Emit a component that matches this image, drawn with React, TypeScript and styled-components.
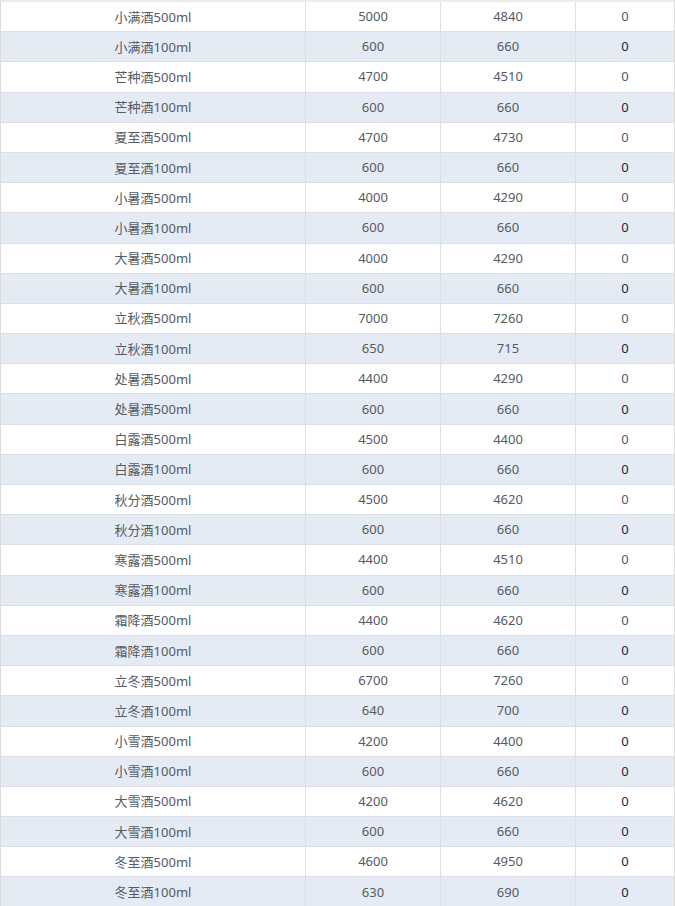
import React from 'react';
import styled, {createGlobalStyle} from 'styled-components';

const GlobalStyle = createGlobalStyle`
  html, body {
    margin: 0;
    padding: 0;
    background: #ffffff;
  }
  body {
    font-family: "Noto Sans", "Noto Sans CJK SC", sans-serif;
  }
`;

type Item = [string, number, number, number];

const items: Item[] = [
  ['小满酒500ml', 5000, 4840, 0],
  ['小满酒100ml', 600, 660, 0],
  ['芒种酒500ml', 4700, 4510, 0],
  ['芒种酒100ml', 600, 660, 0],
  ['夏至酒500ml', 4700, 4730, 0],
  ['夏至酒100ml', 600, 660, 0],
  ['小暑酒500ml', 4000, 4290, 0],
  ['小暑酒100ml', 600, 660, 0],
  ['大暑酒500ml', 4000, 4290, 0],
  ['大暑酒100ml', 600, 660, 0],
  ['立秋酒500ml', 7000, 7260, 0],
  ['立秋酒100ml', 650, 715, 0],
  ['处暑酒500ml', 4400, 4290, 0],
  ['处暑酒500ml', 600, 660, 0],
  ['白露酒500ml', 4500, 4400, 0],
  ['白露酒100ml', 600, 660, 0],
  ['秋分酒500ml', 4500, 4620, 0],
  ['秋分酒100ml', 600, 660, 0],
  ['寒露酒500ml', 4400, 4510, 0],
  ['寒露酒100ml', 600, 660, 0],
  ['霜降酒500ml', 4400, 4620, 0],
  ['霜降酒100ml', 600, 660, 0],
  ['立冬酒500ml', 6700, 7260, 0],
  ['立冬酒100ml', 640, 700, 0],
  ['小雪酒500ml', 4200, 4400, 0],
  ['小雪酒100ml', 600, 660, 0],
  ['大雪酒500ml', 4200, 4620, 0],
  ['大雪酒100ml', 600, 660, 0],
  ['冬至酒500ml', 4600, 4950, 0],
  ['冬至酒100ml', 630, 690, 0],
];

const Wrapper = styled.div`
  width: 673px;
  border-top: 2px solid #ebebeb;
  border-left: 1px solid #dcdcdc;
  border-right: 1px solid #dcdcdc;
`;

const Row = styled.div<{$striped: boolean}>`
  display: grid;
  grid-template-columns: 305px 135px 135px 1fr;
  height: 30.2px;
  box-sizing: border-box;
  border-bottom: 1px solid #dcdfe6;
  background: ${p => (p.$striped ? '#e5ebf5' : '#ffffff')};
`;

const Cell = styled.div<{$dark?: boolean}>`
  display: flex;
  align-items: center;
  justify-content: center;
  padding-bottom: 1px;
  font-size: 13px;
  color: ${p => (p.$dark ? '#1f2533' : '#555a63')};
  border-right: 1px solid #dcdfe6;
  white-space: nowrap;

  &:last-child {
    border-right: none;
  }
`;

export default function App() {
  return <>
    <GlobalStyle />
    <Wrapper>
      {items.map(([name, stock, sold, rest], i) => (
        <Row key={i} $striped={i % 2 === 1}>
          <Cell>{name}</Cell>
          <Cell>{stock}</Cell>
          <Cell>{sold}</Cell>
          <Cell $dark={i % 2 === 1 || i >= 24}>{rest}</Cell>
        </Row>
      ))}
    </Wrapper>
  </>;
}
